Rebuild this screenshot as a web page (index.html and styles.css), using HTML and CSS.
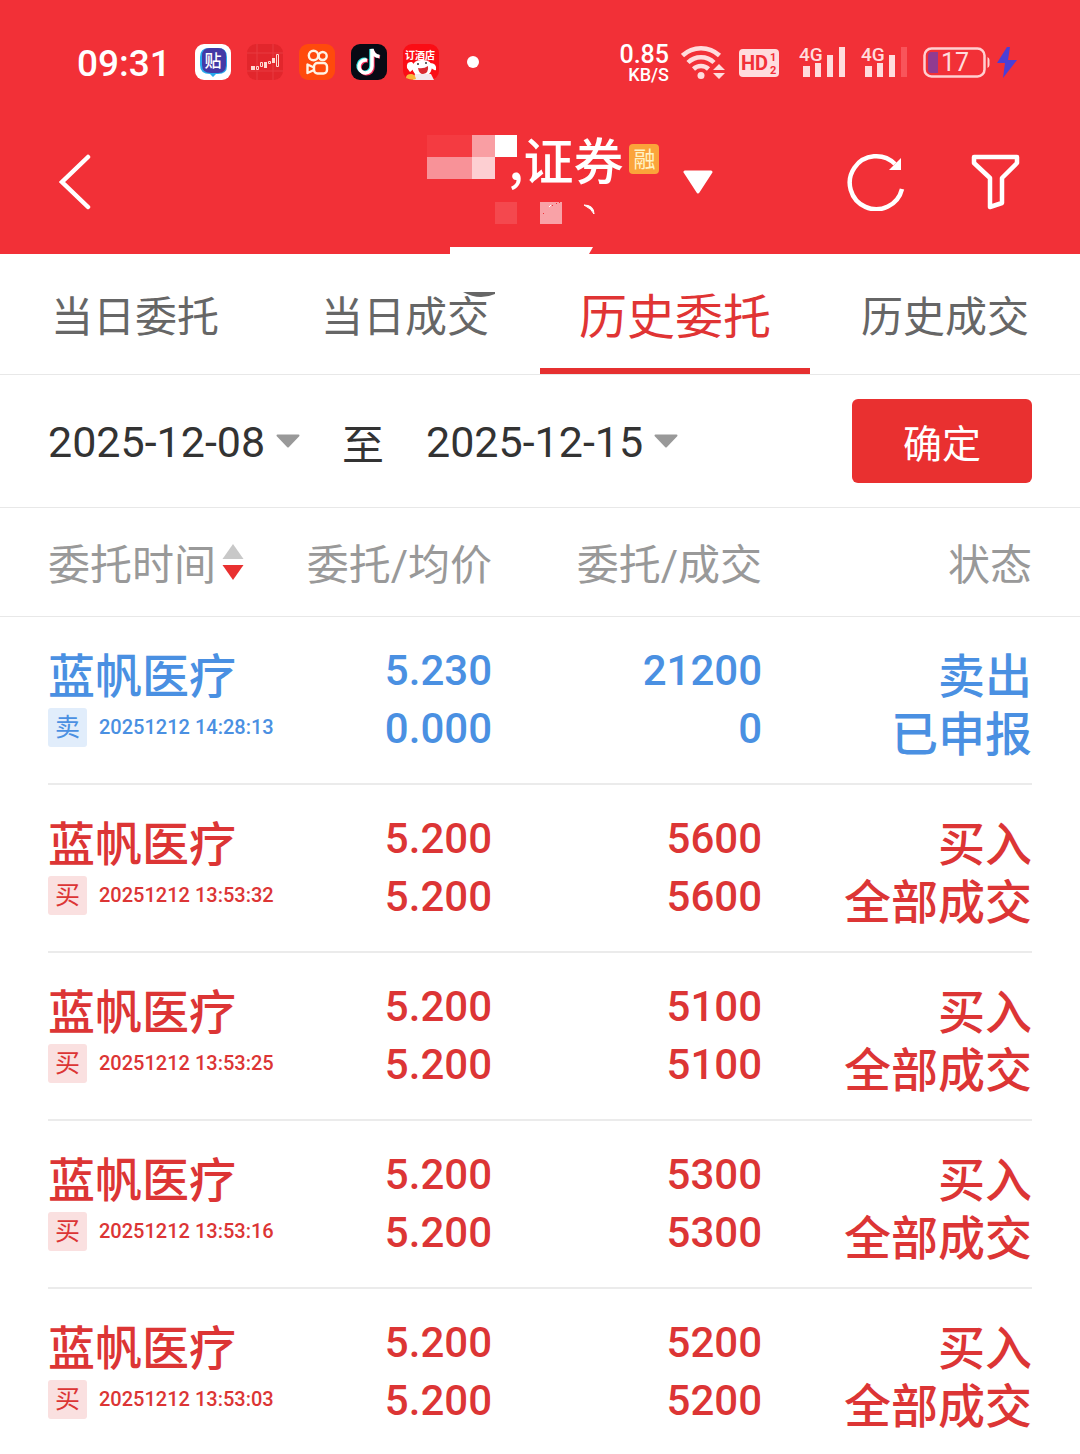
FILE: index.html
```html
<!DOCTYPE html>
<html lang="zh-CN">
<head>
    <meta charset="UTF-8">
    <meta name="viewport" content="width=device-width, initial-scale=1.0">
    <title>历史委托</title>
    <link rel="stylesheet" href="styles.css">
</head>
<body>

    <header class="header">
        <!-- 状态栏 -->
        <div class="status-bar">
            <span class="clock">09:31</span>
            <div class="apps">
                <svg class="app" viewBox="0 0 36 36">
                    <rect width="36" height="36" rx="9" fill="#fff"/>
                    <path d="M14 4h9q9 0 9 9v9q0 8-9 8h-2l-3 3-3-3q-10 0-10-9v-8q0-9 9-9z" fill="#28a9ec"/>
                    <path d="M15 4h8q8 0 8 8v9q0 8-8 8h-7q-9 0-9-8v-9q0-8 8-8z" fill="#443aa6"/>
                    <text x="18" y="23" font-size="17" font-weight="500" text-anchor="middle" fill="#fff">贴</text>
                </svg>
                <svg class="app" viewBox="0 0 36 36">
                    <rect width="36" height="36" rx="9" fill="#e2262c"/>
                    <path d="M0 9h36M0 27h36M10 0v36M26 0v36" stroke="#e83b40" stroke-width="1"/>
                    <path d="M4 22h4v4H4zM17 18h3v6h-3zM25 14h3v5h-3z" fill="#ffd9d2"/>
                    <path d="M9.500 22.500h2v3h-2zM13.500 18.500h2v4h-2zM21.500 17.500h2v2h-2zM29.500 10.500h2v12h-2z" fill="none" stroke="#ffd9d2"/>
                </svg>
                <svg class="app" viewBox="0 0 36 36">
                    <rect width="36" height="36" rx="9" fill="#ff4a0c"/>
                    <g fill="none" stroke="#fff3e4" stroke-width="2.4" stroke-linejoin="round">
                        <circle cx="14.500" cy="11.500" r="4.700"/>
                        <circle cx="23.700" cy="12" r="4"/>
                        <rect x="15" y="19" width="13" height="10.500" rx="3.500"/>
                        <path d="M15 23.500l-6.500-3v8.500l6.500-3"/>
                    </g>
                </svg>
                <svg class="app" viewBox="0 0 36 36">
                    <rect width="36" height="36" rx="9" fill="#080a14"/>
                    <g fill="none" stroke-width="3.500">
                        <path d="M15 15.500a6.500 6.500 0 1 0 5 6V5q1 6 7 7" stroke="#34e5e2"/>
                        <path d="M17 17a6.500 6.500 0 1 0 5 6V7q1 5 7 6" stroke="#f5305c"/>
                        <path d="M16 16.200a6.500 6.500 0 1 0 5 6V5q1 7 7.500 7.500" stroke="#fff"/>
                    </g>
                </svg>
                <svg class="app" viewBox="0 0 36 36">
                    <rect width="36" height="36" rx="9" fill="#fb0d15"/>
                    <path d="M9 18q-6-1-5 6l3 4 6-5M27 19q7 0 6 7-3 1-5-3" fill="#fff"/>
                    <path d="M9 23q2-8 11-7 9 0 9 8-2 9-10 9-9-1-10-10z" fill="#fff"/>
                    <path d="M12 30h16l3 6H10z" fill="#f2e9ef"/>
                    <path d="M15 24q6 1 10-2 1 7-5 8-4 0-5-6z" fill="#d92a31"/>
                    <circle cx="15" cy="20" r="1" fill="#333"/>
                    <circle cx="23" cy="19" r="1" fill="#333"/>
                    <path d="M3 34q0-4 5-4 4 0 5 5-4 2-10-1z" fill="#f9b63b"/>
                    <text x="17" y="15" font-size="10" font-weight="bold" text-anchor="middle" fill="#fff">订酒店</text>
                </svg>
            </div>
            <span class="dot"></span>

            <div class="indicators">
                <div class="net-speed"><b>0.85</b><span>KB/S</span></div>
                <svg width="46" height="36" viewBox="0 0 46 36">
                    <g fill="none" stroke="#ffdcdd" stroke-width="4.500">
                        <path d="M1.500 11.500a27 27 0 0 1 37 0"/>
                        <path d="M7 18.500a18.500 18.500 0 0 1 26 0"/>
                        <path d="M12.500 25a11 11 0 0 1 15 0"/>
                    </g>
                    <circle cx="20" cy="31.500" r="3.500" fill="#ffdcdd"/>
                    <path d="M38 20l6 6H32zM38 35l6-6H32z" fill="#ffdcdd"/>
                </svg>
                <svg width="48" height="36" viewBox="0 0 48 36">
                    <rect x="0" y="5" width="40" height="28" rx="4" fill="#ffdcdd"/>
                    <g fill="#f23037" font-weight="bold">
                        <text x="2" y="26" font-size="20">HD</text>
                        <text x="31" y="17" font-size="11">1</text>
                        <text x="31" y="30" font-size="11">2</text>
                    </g>
                </svg>
                <svg width="50" height="36" viewBox="0 0 50 36">
                    <text x="0" y="17" font-size="19" font-weight="500" fill="#ffdcdd">4G</text>
                    <path d="M4 22h7v11H4zM16 19h6v14h-6zM28 11h6v22h-6zM40 3h6v30h-6z" fill="#ffdcdd"/>
                </svg>
                <svg width="50" height="36" viewBox="0 0 50 36">
                    <text x="0" y="17" font-size="19" font-weight="500" fill="#ffdcdd">4G</text>
                    <path d="M4 22h7v11H4zM16 19h6v14h-6zM28 11h6v22h-6z" fill="#ffdcdd"/>
                    <path d="M40 3h6v30h-6z" fill="#f9545a"/>
                </svg>
                <svg width="94" height="36" viewBox="0 0 94 36">
                    <rect x="1.500" y="4.500" width="60" height="28" rx="7" fill="none" stroke="#ffd0d1" stroke-width="2.500"/>
                    <path d="M64.500 13q2 1 2 3v5q0 2-2 3z" fill="#ffd0d1"/>
                    <path d="M8 8h7v21H8q-3 0-3-4V12q0-4 3-4z" fill="#913b91"/>
                    <text x="32" y="27" font-size="25" text-anchor="middle" fill="#ffdcdd">17</text>
                    <path d="M84 3l-10 16h8l-2 15 14-18h-9l2-13z" fill="#4b3fd6"/>
                </svg>
            </div>
        </div>

        <!-- 标题栏 -->
        <div class="title-bar">
            <button class="icon-button" type="button" aria-label="返回">
                <svg width="32" height="56" viewBox="0 0 32 56">
                    <path d="M29 3L3 28l26 25" fill="none" stroke="#fff" stroke-width="4.500" stroke-linecap="round"/>
                </svg>
            </button>
            <div class="account">
                <h1 class="broker">,证券</h1>
                <span class="margin-tag">融</span>
                <!-- 账号遮挡 -->
                <svg class="mask" width="170" height="166" viewBox="0 0 170 166">
                    <path d="M0 1h45v22H0z" fill="#f43b41"/>
                    <path d="M45 1h23v22H45z" fill="#f99ea3"/>
                    <path d="M68 1h22v22H68z" fill="#fff"/>
                    <path d="M0 23h45v22H0z" fill="#f89298"/>
                    <path d="M45 23h23v22H45z" fill="#fdcfd2"/>
                    <path d="M68 68h22v22H68z" fill="#f4484e"/>
                    <path d="M113 68h22v22h-22z" fill="#f9a2a7"/>
                    <path d="M122 73l2-2" stroke="#fff"/>
                    <path d="M116 79h1v1h-1zM125 71h1v1h-1zM129 69h1v1h-1zM132 68h1v1h-1z" fill="#f23037"/>
                    <path d="M157 71q10 0 10 9-2-5-10-9z" fill="#fff" stroke="#fff"/>
                    <path d="M23 113h143l-4 7H23z" fill="#fff"/>
                    <path d="M36 158h32v2q-16 7-32-2z" fill="#666"/>
                </svg>
                <button class="switch-account" type="button" aria-label="切换账号">
                    <svg width="30" height="24" viewBox="0 0 30 24">
                        <path d="M2 2h26L15 22z" fill="#fff" stroke="#fff" stroke-width="3" stroke-linejoin="round"/>
                    </svg>
                </button>
            </div>
            <div class="actions">
                <button class="icon-button" type="button" aria-label="刷新">
                    <svg width="58" height="58" viewBox="0 0 58 58">
                        <path d="M55 36A26.500 26.500 0 1 1 48 11" fill="none" stroke="#fff" stroke-width="4.500"/>
                        <path d="M54 5v12H42z" fill="#fff"/>
                    </svg>
                </button>
                <button class="icon-button" type="button" aria-label="筛选">
                    <svg width="50" height="58" viewBox="0 0 50 58">
                        <path d="M3 4h43v6L31 25v25l-12 4V25L3 10z" fill="none" stroke="#fff" stroke-width="4.500" stroke-linejoin="round"/>
                    </svg>
                </button>
            </div>
        </div>
    </header>

    <!-- 页签 -->
    <nav class="tabs">
        <a class="tab" href="#">当日委托</a>
        <a class="tab" href="#">当日成交</a>
        <a class="tab active" href="#">历史委托</a>
        <a class="tab" href="#">历史成交</a>
    </nav>

    <!-- 日期筛选 -->
    <form class="filter">
        <div class="date">
            <select aria-label="开始日期"><option>2025-12-08</option></select>
            <svg width="24" height="14" viewBox="0 0 24 14"><path d="M1.500 1.500h21L12 12.500z" fill="#999" stroke="#999" stroke-width="2" stroke-linejoin="round"/></svg>
        </div>
        <span class="to">至</span>
        <div class="date">
            <select aria-label="结束日期"><option>2025-12-15</option></select>
            <svg width="24" height="14" viewBox="0 0 24 14"><path d="M1.500 1.500h21L12 12.500z" fill="#999" stroke="#999" stroke-width="2" stroke-linejoin="round"/></svg>
        </div>
        <button class="confirm" type="button">确定</button>
    </form>

    <!-- 委托列表 -->
    <table class="orders">
        <thead>
            <tr>
                <th class="sortable">委托时间<svg class="sort" width="22" height="36" viewBox="0 0 22 36"><path d="M11 0l10.500 15H.5z" fill="#c8c8c8"/><path d="M11 36l10.500-15H.5z" fill="#e93030"/></svg></th>
                <th>委托/均价</th>
                <th>委托/成交</th>
                <th>状态</th>
            </tr>
        </thead>
        <tbody>
            <tr class="sell">
                <td><div class="name">蓝帆医疗</div><div class="time"><span class="side">卖</span>20251212 14:28:13</div></td>
                <td class="num">5.230<br>0.000</td>
                <td class="num">21200<br>0</td>
                <td>卖出<br>已申报</td>
            </tr>
            <tr class="buy">
                <td><div class="name">蓝帆医疗</div><div class="time"><span class="side">买</span>20251212 13:53:32</div></td>
                <td class="num">5.200<br>5.200</td>
                <td class="num">5600<br>5600</td>
                <td>买入<br>全部成交</td>
            </tr>
            <tr class="buy">
                <td><div class="name">蓝帆医疗</div><div class="time"><span class="side">买</span>20251212 13:53:25</div></td>
                <td class="num">5.200<br>5.200</td>
                <td class="num">5100<br>5100</td>
                <td>买入<br>全部成交</td>
            </tr>
            <tr class="buy">
                <td><div class="name">蓝帆医疗</div><div class="time"><span class="side">买</span>20251212 13:53:16</div></td>
                <td class="num">5.200<br>5.200</td>
                <td class="num">5300<br>5300</td>
                <td>买入<br>全部成交</td>
            </tr>
            <tr class="buy">
                <td><div class="name">蓝帆医疗</div><div class="time"><span class="side">买</span>20251212 13:53:03</div></td>
                <td class="num">5.200<br>5.200</td>
                <td class="num">5200<br>5200</td>
                <td>买入<br>全部成交</td>
            </tr>
        </tbody>
    </table>

</body>
</html>
```

FILE: styles.css
```css
* {
    box-sizing: border-box;
}

body {
    margin: 0;
    background-color: #fff;
    color: #333;
    font-family: Roboto, "Noto Sans CJK SC", sans-serif;
    font-size: 42px;
}

button, select {
    padding: 0;
    border: 0;
    background: none;
    color: inherit;
    font: inherit;
    cursor: pointer;
}

svg {
    display: block;
    flex-shrink: 0;
}

/* 顶部 */
.header {
    background-color: #f23037;
    color: #fff;
}

.status-bar {
    display: flex;
    align-items: center;
    height: 124px;
    padding: 0 63px 0 77px;
}

.clock {
    width: 118px;
    padding-top: 2px;
    font-size: 37px;
    font-weight: 500;
}

.apps {
    display: flex;
    gap: 16px;
}

.app {
    width: 36px;
    height: 36px;
}

.dot {
    width: 12px;
    height: 12px;
    margin-left: 28px;
    border-radius: 50%;
    background-color: #fff;
}

.indicators {
    display: flex;
    align-items: center;
    gap: 12px;
    margin-left: auto;
}

.net-speed {
    display: flex;
    flex-direction: column;
    align-items: flex-end;
    padding-top: 2px;
    font-size: 18px;
    font-weight: 500;
    line-height: 16px;
}

.net-speed b {
    font-size: 25px;
    font-weight: 500;
    line-height: 24px;
}

.title-bar {
    display: grid;
    grid-template-columns: 1fr auto 1fr;
    align-items: center;
    height: 130px;
    padding: 0 59px 14px;
}

.icon-button {
    justify-self: start;
}

.account {
    display: flex;
    align-items: flex-start;
    position: relative;
    height: 96px;
    padding-left: 82px;
    margin-left: 6px;
}

.broker {
    margin: 0;
    font-size: 50px;
    font-weight: 500;
    line-height: 48px;
    font-family: "Noto Sans CJK SC", sans-serif;
}

.margin-tag {
    width: 30px;
    height: 30px;
    margin: 10px 0 0 6px;
    border-radius: 4px;
    background-color: #fba43a;
    color: #fff3c4;
    font-size: 22px;
    line-height: 32px;
    text-align: center;
}

.mask {
    position: absolute;
    top: 0;
    left: 0;
    z-index: 1;
    pointer-events: none;
}

.switch-account {
    position: absolute;
    top: 36px;
    left: 100%;
    margin-left: 24px;
}

.actions {
    display: flex;
    justify-content: flex-end;
    gap: 66px;
}

/* 页签 */
.tabs {
    display: grid;
    grid-template-columns: repeat(4, 1fr);
    border-bottom: 1px solid #e8e8e8;
}

.tab {
    height: 120px;
    border-bottom: 6px solid transparent;
    color: #666;
    line-height: 128px;
    text-align: center;
    text-decoration: none;
}

.tab.active {
    border-color: #e63030;
    color: #e03434;
    font-size: 48px;
}

/* 日期 */
.filter {
    display: flex;
    align-items: center;
    padding: 24px 48px;
    border-bottom: 1px solid #e8e8e8;
}

.date {
    display: flex;
    align-items: center;
    gap: 10px;
}

.date select {
    appearance: none;
    padding-top: 2px;
    font-size: 43px;
}

.to {
    margin: 0 42px;
}

.confirm {
    width: 180px;
    height: 84px;
    margin-left: auto;
    border-radius: 6px;
    background-color: #e93030;
    color: #fff;
    font-size: 39px;
}

/* 列表 */
.orders,
.orders thead,
.orders tbody {
    display: block;
}

.orders tr {
    display: grid;
    grid-template-columns: 37fr 37fr 45fr 45fr;
}

.orders th,
.orders td {
    min-width: 0;
    padding: 0;
    text-align: right;
    white-space: nowrap;
}

.orders th {
    padding-top: 8px;
    color: #999;
    font-weight: normal;
    line-height: 100px;
}

.orders thead tr {
    padding: 0 48px;
    border-bottom: 1px solid #e8e8e8;
}

.orders .sortable {
    display: flex;
    align-items: center;
    gap: 6px;
}

.sort {
    margin-bottom: 8px;
}

.orders tbody tr {
    margin: 0 48px;
    padding: 25px 0 22px;
    border-bottom: 2px solid #ebebeb;
}

.orders tbody tr:last-child {
    padding-bottom: 20px;
    border-bottom: 0;
}

.orders td {
    height: 119px;
    padding-top: 6px;
    font-size: 47px;
    font-weight: 500;
    line-height: 58px;
}

.orders td:first-child {
    text-align: left;
}

.orders .num {
    padding-top: 0;
    font-size: 42px;
}

.time {
    display: flex;
    align-items: center;
    gap: 12px;
    height: 42px;
    font-size: 20px;
    font-weight: 500;
}

.side {
    flex-shrink: 0;
    width: 39px;
    height: 39px;
    border-radius: 3px;
    font-size: 25px;
    font-weight: normal;
    line-height: 39px;
    text-align: center;
}

.sell {
    color: #4a90e2;
}

.sell .side {
    background-color: #e1edfb;
}

.buy {
    color: #dc3535;
}

.buy .side {
    background-color: #fae0e0;
}
```
